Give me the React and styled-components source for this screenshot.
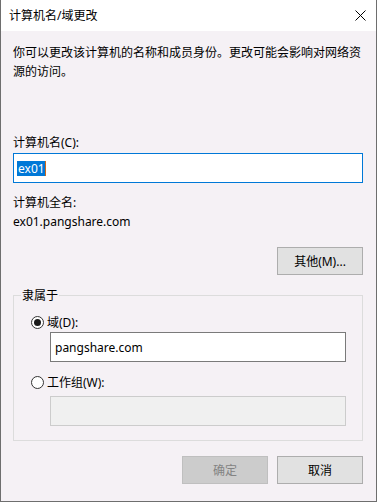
import React from 'react'
import styled, { createGlobalStyle } from 'styled-components'

const GlobalStyle = createGlobalStyle`
  body {
    margin: 0;
    background: #fff;
  }
  * {
    box-sizing: border-box;
  }
`

const Window = styled.div`
  width: 377px;
  height: 502px;
  border: 1px solid #6e6e6e;
  border-top: none;
  background: #f5f1f5;
  font-family: "Noto Sans", "Noto Sans CJK SC", sans-serif;
  font-size: 12px;
  line-height: 19px;
  color: #000;
  display: flex;
  flex-direction: column;
`

const TitleBar = styled.div`
  height: 31px;
  background: #fff;
  display: flex;
  align-items: center;
  justify-content: space-between;
  padding: 0 10px 0 8px;
`

const CloseIcon = () => (
  <svg width="11" height="11" viewBox="0 0 11 11">
    <path d="M0.5 0.5 L10.5 10.5 M10.5 0.5 L0.5 10.5" stroke="#000" strokeWidth="1" fill="none" />
  </svg>
)

const Body = styled.div`
  flex: 1;
  padding: 12px 13px 0 12px;
  display: flex;
  flex-direction: column;
`

const Text = styled.div`
  margin-top: ${p => p.$top || 0}px;
`

const TextBox = styled.div`
  height: 30px;
  margin-top: ${p => p.$top || 0}px;
  margin-left: ${p => p.$indent || 0}px;
  border: 1px solid ${p => (p.$focused ? '#0078d7' : p.$disabled ? '#cccccc' : '#7a7a7a')};
  background: ${p => (p.$disabled ? '#f0f0f0' : '#fff')};
  padding: 0 4px;
  display: flex;
  align-items: center;
`

const Selected = styled.span`
  background: #0078d7;
  color: #fff;
  line-height: 15px;
  padding: 0 0 0 1px;
  margin-left: -1px;
`

const Caret = styled.span`
  width: 1px;
  height: 15px;
  background: #d06a1a;
`

const ButtonRow = styled.div`
  display: flex;
  justify-content: flex-end;
  gap: 9px;
  margin-top: ${p => p.$top || 0}px;
`

const Button = styled.button`
  width: 86px;
  height: 28px;
  border: 1px solid #adadad;
  background: #e1e1e1;
  color: #000;
  font: inherit;
  padding: 0;
  &:disabled {
    background: #cccccc;
    border-color: #bfbfbf;
    color: #838383;
  }
`

const GroupBox = styled.fieldset`
  margin: 11px 0 0;
  padding: 8px 16px 14px 17px;
  border: 1px solid #dcdcdc;
  min-width: 0;
`

const Legend = styled.legend`
  padding: 0 1px;
  margin-left: -10px;
  line-height: 19px;
`

const RadioRow = styled.label`
  display: flex;
  align-items: center;
  gap: 3px;
  height: 19px;
  margin-top: ${p => p.$top || 0}px;
`

const Radio = ({ checked }) => (
  <svg width="13" height="13" viewBox="0 0 13 13">
    <circle cx="6.5" cy="6.5" r="6" fill="#fff" stroke="#333" strokeWidth="1" />
    {checked && <circle cx="6.5" cy="6.5" r="3.5" fill="#1a1a1a" />}
  </svg>
)

export default function App() {
  return (
    <>
      <GlobalStyle />
      <Window>
        <TitleBar>
          <span>计算机名/域更改</span>
          <CloseIcon />
        </TitleBar>
        <Body>
          <Text>你可以更改该计算机的名称和成员身份。更改可能会影响对网络资源的访问。</Text>
          <Text $top={52}>计算机名(C):</Text>
          <TextBox $top={1} $focused>
            <Selected>ex01</Selected>
            <Caret />
          </TextBox>
          <Text $top={10}>计算机全名:</Text>
          <Text>ex01.pangshare.com</Text>
          <ButtonRow $top={16}>
            <Button>其他(M)...</Button>
          </ButtonRow>
          <GroupBox>
            <Legend>隶属于</Legend>
            <RadioRow>
              <Radio checked />
              域(D):
            </RadioRow>
            <TextBox $indent={19}>pangshare.com</TextBox>
            <RadioRow $top={11}>
              <Radio />
              工作组(W):
            </RadioRow>
            <TextBox $indent={19} $top={4} $disabled />
          </GroupBox>
          <ButtonRow $top={15}>
            <Button disabled>确定</Button>
            <Button>取消</Button>
          </ButtonRow>
        </Body>
      </Window>
    </>
  )
}
